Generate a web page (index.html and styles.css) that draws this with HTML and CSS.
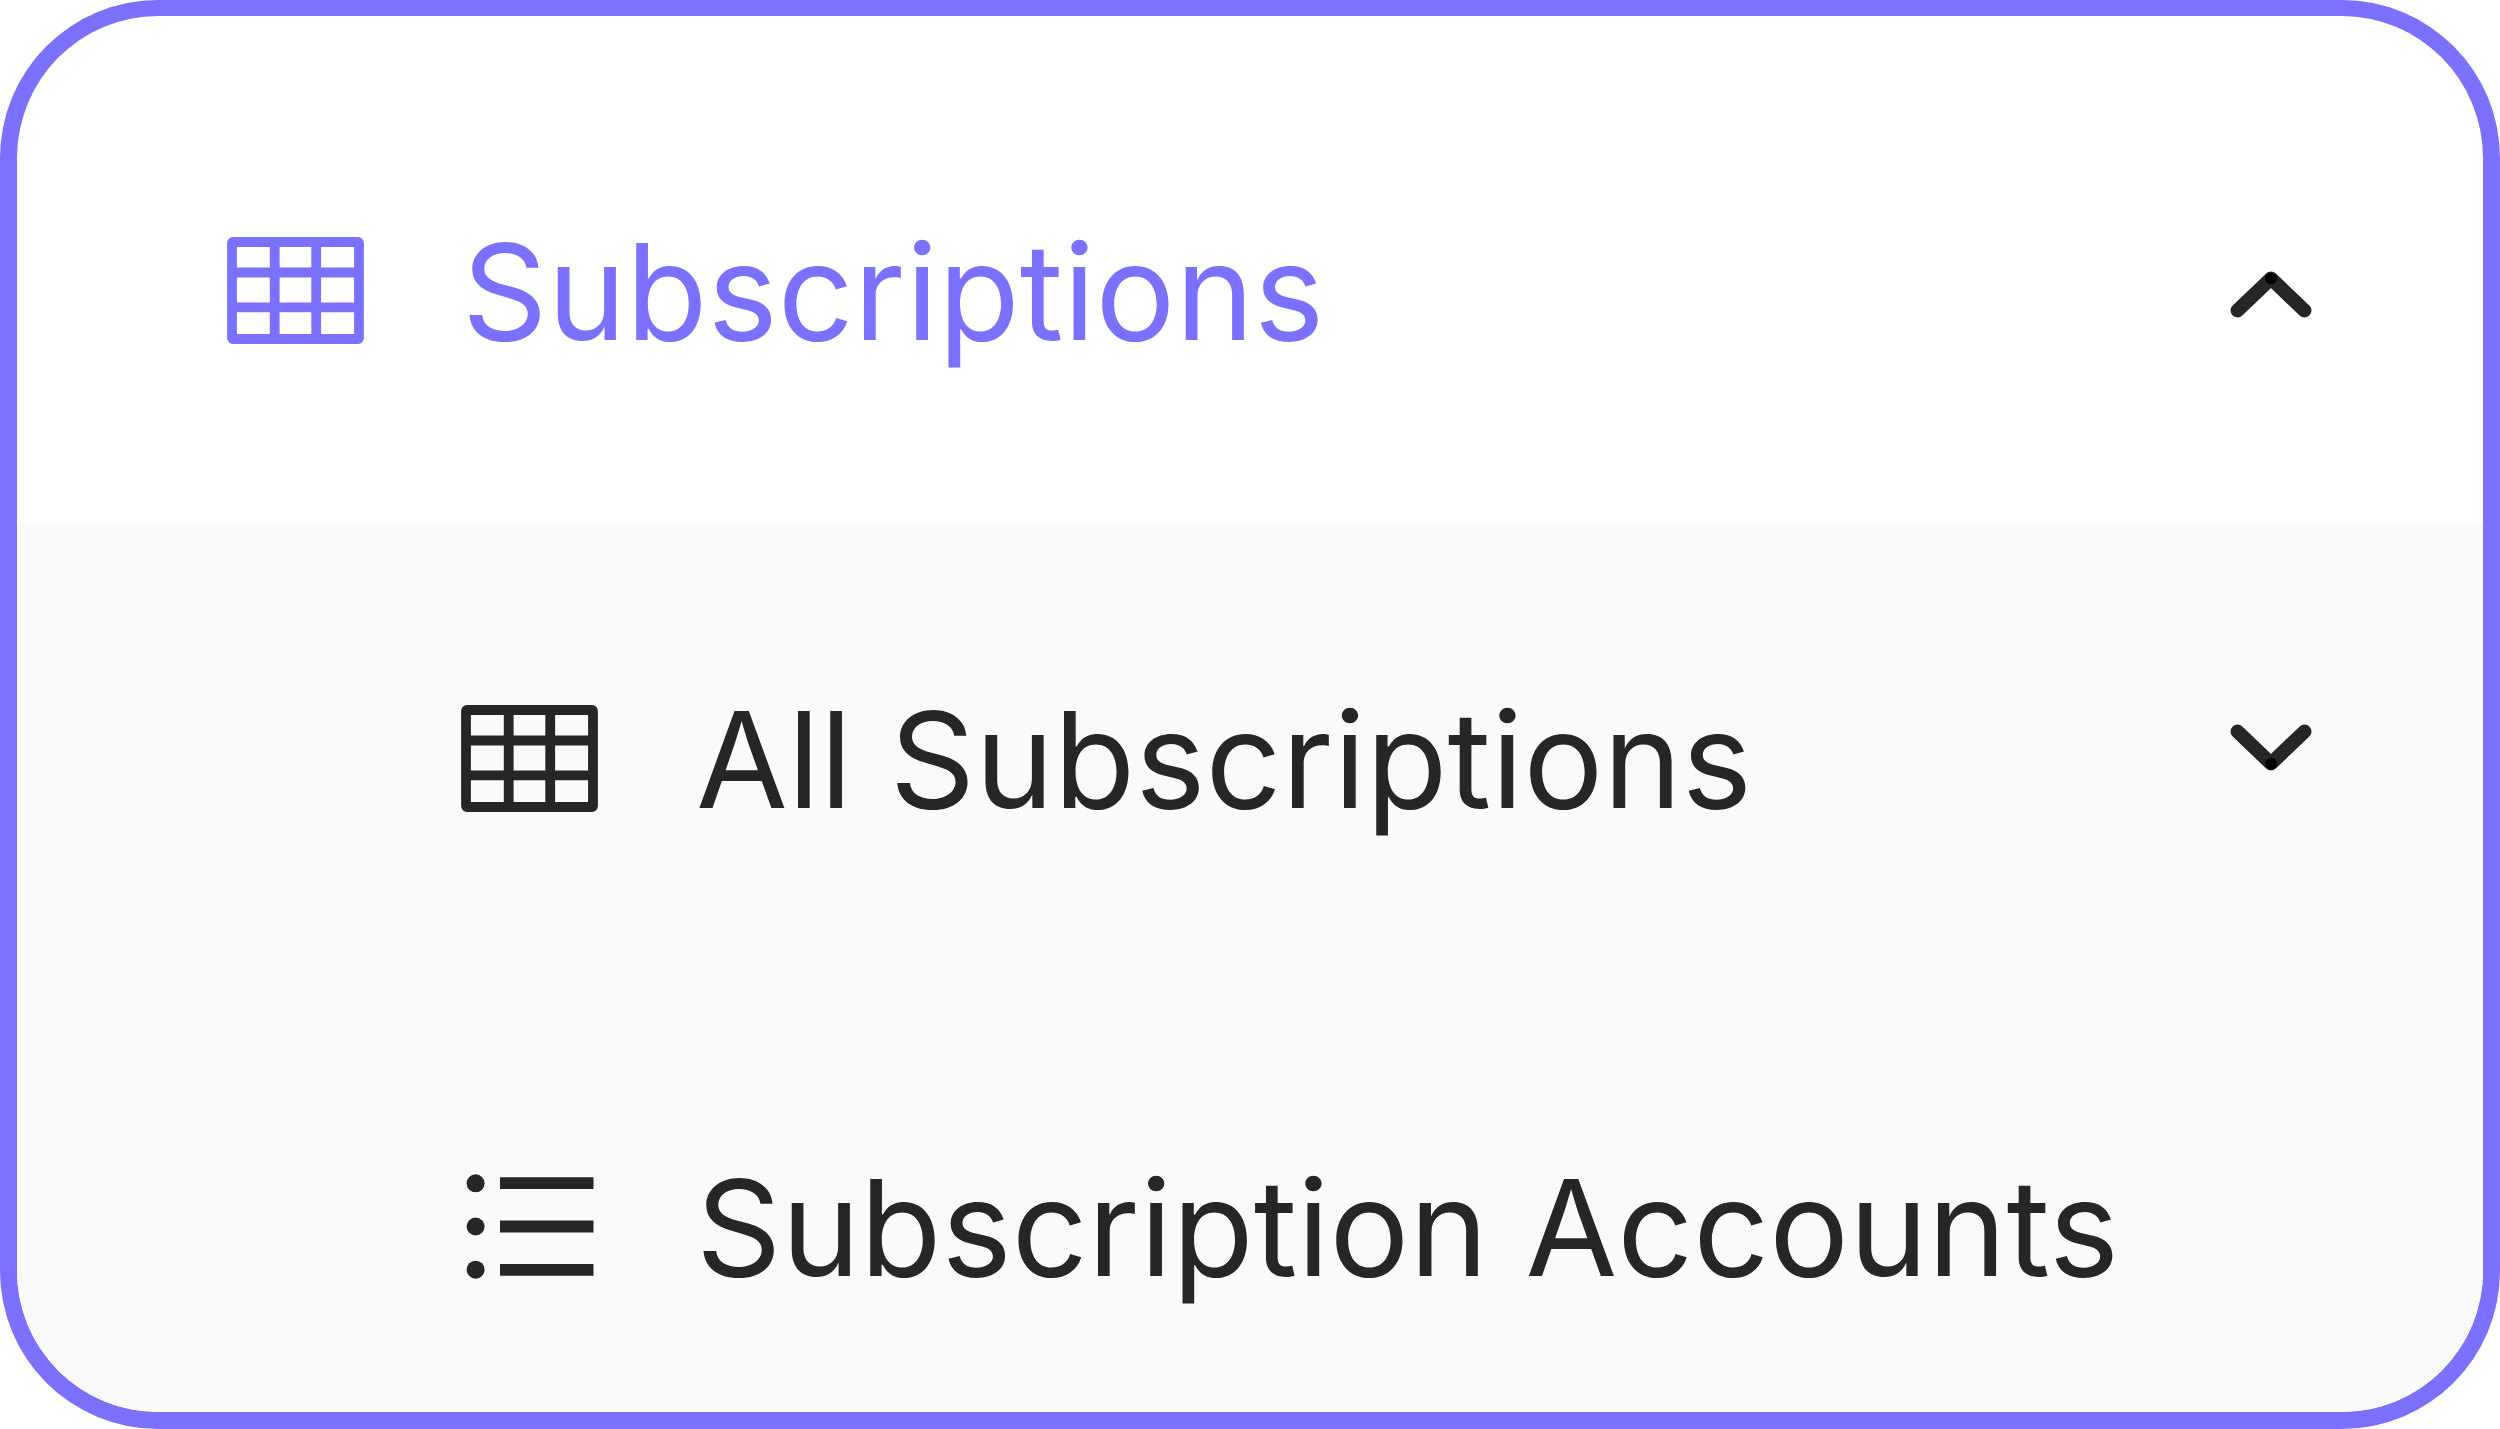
FILE: index.html
```html
<!DOCTYPE html>
<html lang="en">
<head>
  <meta charset="UTF-8">
  <title>Subscriptions</title>
  <link rel="stylesheet" href="styles.css">
</head>
<body>

  <nav class="menu">
    <div class="menu-item active">
      <svg class="icon" viewBox="0 0 137 107">
        <rect x="5" y="5" width="127" height="97" rx="1"/>
        <path d="M47.7 5v97M89.2 5v97M5 35.5h127M5 70.3h127"/>
      </svg>
      <span class="label">Subscriptions</span>
      <svg class="chevron up" viewBox="0 0 84 52">
        <path d="M8.5 42.5L42 10.5L75.5 42.5"/>
        <circle cx="42" cy="10.5" r="6"/>
      </svg>
    </div>

    <div class="submenu">
      <div class="menu-item">
        <svg class="icon" viewBox="0 0 137 107">
          <rect x="5" y="5" width="127" height="97" rx="1"/>
          <path d="M47.7 5v97M89.2 5v97M5 35.5h127M5 70.3h127"/>
        </svg>
        <span class="label">All Subscriptions</span>
        <svg class="chevron down" viewBox="0 0 84 52">
          <path d="M8.5 9.5L42 41.5L75.5 9.5"/>
          <circle cx="42" cy="41.5" r="6"/>
        </svg>
      </div>

      <div class="menu-item">
        <svg class="icon list" viewBox="0 0 137 107">
          <path d="M39 10.2h93.5M39 53.5h93.5M39 96.8h93.5"/>
          <circle cx="14.6" cy="10.3" r="9"/>
          <circle cx="14.6" cy="53.5" r="9"/>
          <circle cx="14.6" cy="96.7" r="9"/>
        </svg>
        <span class="label">Subscription Accounts</span>
      </div>
    </div>
  </nav>

</body>
</html>
```
FILE: styles.css
```css
body {
  margin: 0;
  background-color: #fff;
  font-family: Inter, "Liberation Sans", sans-serif;
}
.menu {
  box-sizing: border-box;
  width: 2500px;
  height: 1429px;
  padding-top: 41px;
  border: 17px solid #7b70ff;
  border-top-width: 16px;
  border-radius: 158px;
  background-color: #fff;
  overflow: hidden;
}
.menu-item {
  box-sizing: border-box;
  display: flex;
  align-items: center;
  height: 468.5px;
  padding: 0 170px 0 210px;
  color: #262626;
}
.menu-item.active {
  height: 467px;
  color: #7b70ff;
}
.submenu {
  height: 900px;
  background-color: #fafafa;
}
.submenu .menu-item {
  padding-left: 444px;
}
.icon {
  flex: none;
  width: 137px;
  height: 107px;
  margin-right: 98px;
  fill: none;
  stroke: currentColor;
  stroke-width: 9.8px;
  overflow: visible;
}
.icon.list {
  stroke-width: 11.8px;
}
.icon.list circle {
  fill: currentColor;
  stroke: none;
}
.label {
  padding-top: 3px;
  font-size: 133px;
  line-height: 160px;
  letter-spacing: 0.05px;
  white-space: nowrap;
}
.chevron {
  flex: none;
  width: 84px;
  height: 52px;
  margin-left: auto;
  fill: none;
  stroke: #262626;
  stroke-width: 14px;
  stroke-linecap: round;
  stroke-linejoin: round;
}
.chevron circle {
  fill: #000;
  stroke: none;
}
.chevron.up {
  margin-top: 6px;
}
.chevron.down {
  margin-bottom: 21px;
}
```
